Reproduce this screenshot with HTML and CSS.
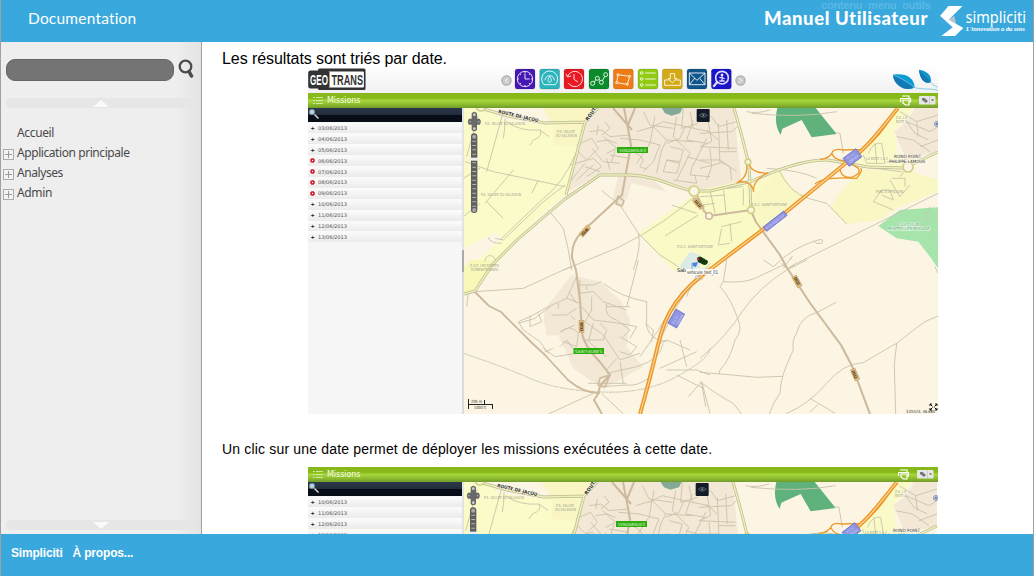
FILE: index.html
```
<!DOCTYPE html>
<html lang="fr">
<head>
<meta charset="utf-8">
<title>Documentation</title>
<link rel="stylesheet" href="styles.css">
</head>
<body>
<div class="page">
  <header class="top">
    <h1 class="doc-title">Documentation</h1>
    <div class="brand">
      <span class="skip">contenu&nbsp; menu&nbsp; outils</span>
      <span class="manual">Manuel Utilisateur</span>
      <svg class="logo" width="90" height="32" viewBox="0 0 90 32">
        <path d="M8.500 13.500L14.500 10L16 18Z" fill="#b4c3cf"/>
        <path d="M8.500 0H22.500L8.500 14L0 10Z" fill="#fff"/>
        <path d="M0 9.700L8.500 13.500L23.300 22L15 30H1.300L12.700 21.300Z" fill="#fff"/>
        <text x="25.500" y="17" textLength="60.500" lengthAdjust="spacingAndGlyphs" class="logo-name">simpliciti</text>
        <text x="26" y="25" textLength="59" lengthAdjust="spacingAndGlyphs" class="logo-tag">L'innovation a du sens</text>
      </svg>
    </div>
  </header>

  <div class="middle">
    <nav class="side">
      <div class="search">
        <span class="field"></span>
        <svg width="18" height="22" viewBox="0 0 18 22" fill="none" stroke="#4c4c4c"><circle cx="7.500" cy="7.500" r="5.800" stroke-width="2.300"/><path d="M11 12.500L13.500 17" stroke-width="3.600" stroke-linecap="round"/></svg>
      </div>
      <div class="scroller"><svg width="16" height="7" viewBox="0 0 16 7"><path d="M0 7L8 0L16 7Z" fill="#fafafa"/></svg></div>
      <ul class="tree">
        <li><i class="none"></i>Accueil</li>
        <li><i class="plus"></i><span class="long">Application principale</span></li>
        <li><i class="plus"></i><span class="long">Analyses</span></li>
        <li><i class="plus"></i>Admin</li>
      </ul>
      <div class="scroller bottom"><svg width="16" height="7" viewBox="0 0 16 7"><path d="M0 0L8 7L16 0Z" fill="#fafafa"/></svg></div>
    </nav>

    <main class="content">
      <p class="first">Les résultats sont triés par date.</p>
      <section class="shot">
        <div class="appbar">
          <svg width="630" height="27" viewBox="308 66 630 27">
            <rect x="318" y="68.500" width="47.500" height="21.500" rx="1.500" fill="#333"/>
            <rect x="309" y="71" width="55.500" height="17" rx="1.500" fill="#fff" stroke="#333" stroke-width="1.200"/>
            <rect x="308.500" y="71" width="21" height="17" rx="1.500" fill="#333"/>
            <text x="310" y="85" textLength="18" lengthAdjust="spacingAndGlyphs" class="geo" fill="#fff">GEO</text>
            <text x="331.500" y="85" textLength="31.500" lengthAdjust="spacingAndGlyphs" class="geo" fill="#333">TRANS</text>
            <g fill="#ccc" stroke="#aaa" stroke-width="1.200"><circle cx="506.500" cy="80.500" r="4.600"/><circle cx="740.500" cy="80.500" r="4.600"/></g>
            <path d="M507.500 78.500L505.500 80.500L507.500 82.500M739.500 78.500L741.500 80.500L739.500 82.500" fill="none" stroke="#fff"/>
            <g transform="translate(500 62) scale(.33333)">
              <g stroke="#0003" stroke-width="2">
                <rect x="45" y="21" width="60" height="60" rx="7" fill="#4717b4"/>
                <rect x="119" y="21" width="60" height="60" rx="7" fill="#2cb5bd"/>
                <rect x="192" y="21" width="60" height="60" rx="7" fill="#e91821"/>
                <rect x="267" y="21" width="60" height="60" rx="7" fill="#0b8b2b"/>
                <rect x="340" y="21" width="60" height="60" rx="7" fill="#ee7c16"/>
                <rect x="414" y="21" width="60" height="60" rx="7" fill="#91cc13"/>
                <rect x="487" y="21" width="60" height="60" rx="7" fill="#d3aa16"/>
                <rect x="561" y="21" width="60" height="60" rx="7" fill="#10568b"/>
                <rect x="634" y="21" width="60" height="60" rx="7" fill="#1a13cb"/>
              </g>
              <g fill="none" stroke="#fff" stroke-opacity=".85" stroke-width="3">
                <circle cx="75" cy="51" r="23"/><path d="M75 34V51H89M75 29V33M75 69V73M53 51H57M93 51H97M60 36L63 39M90 36L87 39M60 66L63 63M90 66L87 63"/>
                <path d="M132 68A24 24 0 1 1 166 68ZM135 55A14 14 0 0 1 163 55M149 43C143 51 142 60 149 61C156 60 155 51 149 43Z"/>
                <path d="M203 43A23 23 0 1 1 205 63M198 36L203 45L213 42M222 36V52L234 60"/>
                <path d="M280 65L292 45L304 61L317 39"/><g fill="#0b8b2b"><circle cx="278" cy="64" r="6"/><circle cx="292" cy="49" r="6"/><circle cx="304" cy="61" r="6"/><circle cx="317" cy="38" r="6"/></g>
                <path d="M354 38L389 43L382 67L350 62Z"/><g fill="#ee7c16"><circle cx="354" cy="38" r="3"/><circle cx="389" cy="43" r="3"/><circle cx="382" cy="67" r="3"/><circle cx="350" cy="62" r="3"/></g>
                <path d="M436 33H467M436 51H467M436 69H467"/><circle cx="425" cy="33" r="4"/><circle cx="425" cy="51" r="4"/><circle cx="425" cy="69" r="4"/>
                <path d="M506 54H494V70H541V54H529M511 35H524V50H531L517 62L504 50H511Z"/>
                <path d="M568 33H615V68H568ZM568 33L591 55L615 33M568 68L584 49M615 68L599 49"/>
                <circle cx="666" cy="47" r="19" stroke-width="5"/><path d="M652 60L640 74" stroke-width="7"/><circle cx="666" cy="39" r="3" fill="#fff"/><path d="M666 43V57M658 46L674 50M658 57H674" stroke-width="4"/>
              </g>
            </g>
            <g transform="translate(740 62) scale(.33333)">
              <path d="M459 38C497 32 522 46 524 76C505 88 463 78 459 38Z" fill="#0a9bd0"/><path d="M459 38L524 76C505 88 463 78 459 38Z" fill="#1379b5"/>
              <path d="M537 23C558 26 576 38 573 61C556 67 540 55 537 23Z" fill="#0d98cc"/><path d="M537 23L573 61C556 67 540 55 537 23Z" fill="#1679b2"/>
              <path d="M518 75C548 85 570 77 596 86M570 58C577 70 588 72 596 77M459 38C490 51 505 62 524 76" fill="none" stroke="#6dc4e7" stroke-width="2.500"/>
            </g>
          </svg>
        </div>
        <div class="greenbar">
          <svg width="10" height="9" viewBox="0 0 10 9"><path d="M0 1.500H2M3 1.500H10M0 4.500H2M3 4.500H10M0 7.500H2M3 7.500H10" stroke="#cfe99d" stroke-width="1"/></svg>
          <b>Missions</b>
          <svg class="tools" width="36" height="11" viewBox="0 0 36 11"><path d="M2 1H9V3M.5 7V3.500H10.500V7H8.500M3 5H9V10H5.500L3 8Z" fill="none" stroke="#fff" stroke-width="1.200"/><rect x="19" y="1" width="16.500" height="8.500" rx="1" fill="#e6e6e6"/><path d="M22 3L24.500 3L28 6L26 8L22 5Z" fill="#777"/><path d="M29.500 1V9.500" stroke="#bbb" stroke-width=".6"/><path d="M31 4.500H34L32.500 6Z" fill="#444"/></svg>
        </div>
        <div class="body">
          <div class="list">
            <div class="find"><svg width="13" height="13" viewBox="0 0 13 13"><circle cx="4" cy="4" r="2.700" fill="#b9d3e1" stroke="#71889a"/><path d="M6.500 6.500L10.500 10.500" stroke="#ddd" stroke-width="1.400"/></svg></div>
            <ul>
              <li>03/06/2013</li><li>04/06/2013</li><li>05/06/2013</li>
              <li class="err">06/06/2013</li><li class="err">07/06/2013</li><li class="err">08/06/2013</li><li class="err">09/06/2013</li>
              <li>10/06/2013</li><li>11/06/2013</li><li>12/06/2013</li><li>13/06/2013</li>
            </ul>
          </div>
          <div class="split"></div>
          <svg class="map" width="474" height="306" viewBox="464 108 474 306">
            <g id="map">
              <rect x="464" y="108" width="474" height="306" fill="#fcf5e4"/>
              <!-- land use -->
              <g transform="translate(460 100) scale(.33333)">
                <path d="M10 20H65L130 60L250 75L375 65L320 280L220 365L110 490L95 510H10L70 465L125 415L105 398L10 445Z" fill="#fbfbc9"/>
                <path d="M245 20H410L375 65L350 140L280 135L278 75Z" fill="#f9f6c4"/>
                <path d="M400 20H820L845 250L740 270L640 262L560 230L515 235L495 290L490 318L458 300L475 226L420 223L318 278L350 140L375 65Z" fill="#f3e8d5"/>
                <path d="M515 235L495 250L487 290L500 300L515 250L620 275L570 230Z" fill="#f3e8d5"/>
                <path d="M605 24H668L660 40L635 47L615 40Z" fill="#84aa96"/>
                <path d="M535 400L700 285L860 250L880 340L860 400L760 500L640 510L600 470Z" fill="#fafac6"/>
                <path d="M690 455L760 480V515L655 505Z" fill="#dcebe5"/>
              </g>
              <g transform="translate(700 100) scale(.33333)">
                <path d="M0 270L115 245L160 255L240 208L280 270L295 310L260 335L50 500L0 505Z" fill="#fafac6"/>
                <path d="M125 325L240 208L275 265L325 292L190 390L150 325Z" fill="#f9f7c3"/>
                <path d="M592 24H640L583 90L590 150L615 180V205L500 200L455 190Z" fill="#fafac8"/>
                <path d="M485 210L620 210L714 240V275L590 325L540 360L440 372L390 325L425 270Z" fill="#f9f7c3"/>
                <path d="M645 24H714V155L620 180L583 95L620 65Z" fill="#f3e8d5"/>
                <path d="M232 24H347L410 102L335 112L305 60L247 86L242 105Q220 72 232 24Z" fill="#5fb27c"/>
                <path d="M535 378L600 330L714 322V505L690 470L655 425L590 415Z" fill="#a6e4ab"/>
              </g>
              <g transform="translate(460 260) scale(.33333)">
                <path d="M10 25L30 0H115L95 30L50 90L10 105Z" fill="#f8f8b8"/>
                <path d="M335 45L420 65L485 125L510 180L500 260L548 322L430 387L340 325L295 225L260 227L250 170L265 135Z" fill="#f3e8d5"/>
              </g>
              <!-- minor streets -->
              <g fill="none" stroke="#c8c3a9" stroke-width="2.700">
                <g transform="translate(460 100) scale(.33333)">
                  <path d="M130 35L80 215M135 55Q135 90 130 115M55 45L20 170M140 65Q180 95 240 90L268 110M240 90Q250 110 220 120L210 135M15 185L100 215L315 260M160 210L75 310M10 235L60 205M235 240L215 280M80 305L130 355M10 350L60 310M345 165Q310 250 245 300L120 420M130 420L250 305L315 255M85 412Q90 430 125 430M105 415L130 420M75 485Q75 467 90 467T106 483L98 492"/>
                  <path d="M390 95L425 90L450 110L510 105M350 135L395 115L415 145L380 180L350 150M330 195L400 175L425 200L380 230M395 145L430 185L480 190M350 240L400 195M440 175L450 210M375 190L330 245M430 110L470 145L440 160M530 95L580 80L620 120L700 125M540 120L600 135L580 185L550 215M585 50L570 130L530 190M520 155Q560 175 545 190T560 205M620 120L605 150L590 220M650 50L640 110L690 160L650 240M700 60L680 120L740 130M620 180L660 190L650 220L610 215ZM630 140L670 150L660 185L620 180M550 35L570 75L640 85M570 85L610 65L700 85M670 25L665 85L715 70M740 115L700 195M680 170L750 190M700 190L690 225L750 230M640 240L710 250L705 225M450 165L510 175M465 150L455 185M415 75L410 105M435 65L450 85L425 105M480 115L540 120M375 200L420 215M620 130L660 115L675 80M410 125L445 120L470 130M690 35L700 85L750 95"/>
                  <path d="M425 272L480 315L535 400L600 465L655 500M535 400Q545 440 520 510M265 330L310 385Q325 440 335 510M720 275Q620 370 480 440L310 510M615 408L715 345M635 315L710 340M700 290Q700 330 735 320"/>
                </g>
                <g transform="translate(700 100) scale(.33333)">
                  <path d="M0 60L35 50L55 80L110 65M0 100L95 95L112 80M0 140L110 145M25 65L35 125L0 140M55 70L60 190L0 205M80 60L85 150M0 180L60 180L110 215M20 90L55 120M60 155L110 155M30 145L35 200L20 240M60 185L90 200L95 240"/>
                  <path d="M30 270L45 340M70 260L78 340M0 290L75 285M5 315L45 310M80 265L130 260M130 265V315M65 380L125 365M65 385L55 435L90 430M90 370L95 425M140 35Q170 42 210 30M155 40Q300 55 410 35M200 205Q300 210 350 235M235 208Q270 280 325 295L380 310Q400 330 440 372"/>
                  <path d="M410 98L420 100L430 160M270 500L714 280"/>
                  <path d="M600 35L650 65L714 45M620 65L690 95L714 80M590 110L640 120L690 155M650 65L655 110M620 65L645 100L685 120M660 140L714 120M505 160Q520 125 545 130L555 190L500 190L490 165M525 130L530 190M560 185L615 185M485 200L605 215M545 285L580 300L570 270L545 270L520 305L580 330M575 235H615V260M570 240L600 290L630 255M690 320L675 350L690 370M665 370L700 400M220 500Q280 440 355 420Q375 415 365 430Q350 435 340 422M220 500L190 480M250 505Q290 450 270 480M600 230L620 205"/>
                </g>
                <g transform="translate(460 260) scale(.33333)">
                  <path d="M45 95L190 85L310 30L335 20M535 0L510 100L500 140M350 50L320 115L265 140L210 170L175 185L190 210L240 245L265 280M175 190L225 175L270 140M235 160L245 185L210 200L210 165M360 75H400L425 65M360 60V100L400 95L430 125L500 150M380 75V90M320 115L360 130M330 100L350 130M395 110V150L375 185L430 225L480 300L540 280M440 140L510 140M440 130Q430 170 470 180L510 210L490 230M275 165L320 165L350 145M330 165L345 180M365 140L400 180L480 190L530 200L510 235M295 145V130M305 215Q330 190 355 220L350 260L310 245M345 195L300 215M300 260L320 240L350 280L285 290L250 265M375 240L430 240L440 210L420 190M400 190L385 245L440 290M480 230L530 260L510 285L480 275M470 295L440 330M480 305L490 370M430 70Q480 110 560 125V200Q570 240 620 245M555 190L580 210L575 245M440 340L530 320Q600 300 610 250M385 370L500 370M600 250L620 240L690 270M430 380L500 375Q530 380 565 355M255 275L280 265M750 10L690 80L650 140L600 240M680 110Q690 70 730 55M630 150L595 210L540 290"/>
                  <path d="M10 280Q130 320 210 355T410 395Q550 405 650 350T750 265" stroke-dasharray="5 2" stroke="#b8b4a0"/>
                  <path d="M620 330H710L750 345M660 240L680 320M600 325L710 275M725 365L685 410M725 365L750 460M650 345L730 385M400 400L265 462M425 400L490 462M20 140L25 100"/>
                </g>
                <g transform="translate(700 260) scale(.33333)">
                  <path d="M80 0L70 65L60 80Q90 110 113 175Q130 210 105 240Q90 300 60 330L57 342M70 65Q130 70 165 55L250 15M0 295Q80 230 130 150Q180 80 260 30L320 0M408 127L350 158Q300 170 290 220Q275 240 280 270Q240 350 240 400Q220 425 208 462M0 337Q100 345 170 352L250 349M590 250L583 315L587 462M257 462Q330 430 380 370T490 308Q570 260 590 250Q640 210 675 185L714 168M0 365Q60 410 100 430L125 462M5 370L17 440M330 415L405 460M355 433L330 455M245 10Q260 35 285 15M705 20L714 40"/>
                </g>
              </g>
              <!-- departmental roads -->
              <g fill="none" stroke="#cdb99c" stroke-linejoin="round">
                <path d="M624 108L629 134L631 145L622 195L583 231Q571 242 572 258L576 270L580 300L582 333Q584 346 600 362L610 375L600 386L598 394L594 400L602 414M613 108L632 130M635 108L628 125" stroke-width="2"/>
                <path d="M475 292L489 306L501 312L532 343L545 355L568 380Q585 394 600 393" stroke-width="1.800"/>
                <path d="M697 195L704 211L709 216L751 210M752 213L756 222L780 255L787 268L810 303L841 345L852 366L870 414" stroke-width="2.100"/>
                <circle cx="709" cy="216" r="3.300" fill="#fcf5e4" stroke-width="1.600"/><path d="M600 378L610 375L605 387L598 385ZM618 196L624 201L622 206L616 204Z" stroke-width="1.500"/>
              </g>
              <!-- primary roads -->
              <g fill="none" stroke-linejoin="round">
                <path d="M480 108L508 116L545 123L585 122M598 108L585 122L566 195M464 294L475 291L492 265L518 239L565 199L600 175H630C660 176 678 190 695 191H710L752 181Q800 159 828 160L868 167L904 168L938 152M734 108Q742 135 749 165L751 210" stroke="#b9bb8c" stroke-width="2.900"/>
                <path d="M480 108L508 116L545 123L585 122M598 108L585 122L566 195M464 294L475 291L492 265L518 239L565 199L600 175H630C660 176 678 190 695 191H710L752 181Q800 159 828 160L868 167L904 168L938 152M734 108Q742 135 749 165L751 210" stroke="#edeebc" stroke-width="1.500"/>
                <g fill="#fcf5e4" stroke="#d0d184" stroke-width="1.700"><circle cx="694" cy="191" r="5"/><circle cx="748" cy="162" r="2.800"/><circle cx="751" cy="210" r="3.400"/><circle cx="908" cy="167" r="5"/><circle cx="481" cy="106" r="5"/></g>
              </g>
              <!-- motorway -->
              <g fill="none" stroke="#ed982b">
                <g transform="translate(700 100) scale(.33333)" stroke-width="4">
                  <path d="M140 195Q145 230 112 248M148 195Q158 220 205 220M110 248Q150 235 162 275M160 275Q158 240 205 218M360 178Q390 175 398 155Q405 145 430 150L490 148Q540 110 575 50M395 160Q405 185 440 182M420 200Q420 235 455 232Q485 220 475 205L440 180M345 252Q370 228 470 235Q490 210 482 205"/>
                </g>
                <path d="M898 108C880 130 867 148 852 158L786 212L712 268C680 290 665 313 658 345C652 370 647 390 640 414" stroke-width="4"/>
                <path d="M898 108C880 130 867 148 852 158L786 212L712 268C680 290 665 313 658 345C652 370 647 390 640 414" stroke="#f9d9a0" stroke-width="1.100"/>
              </g>
              <!-- labels -->
              <g class="lab dark">
                <text transform="translate(498 113) rotate(13)" textLength="41" lengthAdjust="spacingAndGlyphs">ROUTE DE JACOU</text>
                <text transform="translate(588 121) rotate(-55)" textLength="18" lengthAdjust="spacingAndGlyphs">ROUTE</text>
              </g>
              <g class="lab dark place">
                <text x="894" y="158" textLength="27" lengthAdjust="spacingAndGlyphs">ROND POINT</text><text x="889" y="162.500" textLength="36" lengthAdjust="spacingAndGlyphs">PHILIPPE LAMOUR</text>
              </g>
              <g class="lab">
                <text x="485" y="125" textLength="40" lengthAdjust="spacingAndGlyphs">P.A. VALLEE DU SALAISON</text><text x="481" y="195.500" textLength="40" lengthAdjust="spacingAndGlyphs">P.A. VALLEE DU SALAISON</text>
                <text x="557" y="133" textLength="18" lengthAdjust="spacingAndGlyphs">P.A. VALLEE</text><text x="556" y="137" textLength="21" lengthAdjust="spacingAndGlyphs">DU SALAISON</text>
                <text x="677" y="247.500" textLength="36" lengthAdjust="spacingAndGlyphs">Z.A.C. SAINT-ANTOINE</text><text x="751" y="206" textLength="36" lengthAdjust="spacingAndGlyphs">Z.A.C. SAINT-ANTOINE</text>
                <text x="470" y="267" textLength="29" lengthAdjust="spacingAndGlyphs">Z.A.E. LES PORTES</text><text x="471" y="271" textLength="27" lengthAdjust="spacingAndGlyphs">DOMENITIENNES</text>
                <text x="866" y="160" textLength="22" lengthAdjust="spacingAndGlyphs">LA BISTE 1 &amp; 2</text><text x="876" y="193" textLength="27" lengthAdjust="spacingAndGlyphs">PARC D'APTALION</text>
                <text x="896" y="119" textLength="11" lengthAdjust="spacingAndGlyphs">Z.A. LA</text><text x="896" y="123" textLength="11" lengthAdjust="spacingAndGlyphs">BISTE 2</text>
              </g>
              <g class="lab pale"><text x="899" y="226" textLength="20" lengthAdjust="spacingAndGlyphs">GOLF CLUB</text><text x="888" y="230" textLength="42" lengthAdjust="spacingAndGlyphs">MONTPELLIER MASSANE</text></g>
              <rect x="617" y="147" width="31" height="6" fill="#2dad0d"/><rect x="573.500" y="348" width="30.500" height="6" fill="#2dad0d"/>
              <g class="lab white"><text x="619" y="151.700" textLength="27" lengthAdjust="spacingAndGlyphs">VENDARGUES</text><text x="575" y="352.700" textLength="27" lengthAdjust="spacingAndGlyphs">SAINT-AUNES</text></g>
              <g fill="#9095df" stroke="#6870d2" stroke-width=".8">
                <rect x="844.500" y="152.500" width="16" height="10" transform="rotate(-37 852.500 157.500)"/><rect x="762" y="218.500" width="26" height="5.500" transform="rotate(-38 775 221)"/><rect x="668.500" y="314" width="16" height="10" transform="rotate(-60 676 319)"/>
              </g>
              <g class="lab white road">
                <text transform="translate(848 159.500) rotate(-37)" textLength="9">E15/</text><text transform="translate(850 163) rotate(-37)" textLength="11">E80/A9</text>
                <text transform="translate(767 229.500) rotate(-38)" textLength="22">E15/E80/A9</text>
                <text transform="translate(674 324) rotate(-60)" textLength="9">E15/</text><text transform="translate(678 325) rotate(-60)" textLength="11">E80/A9</text>
              </g>
              <g fill="#dfbd83" stroke="#bd9960" stroke-width=".5">
                <rect x="579" y="228.500" width="12" height="5" transform="rotate(-48 585 231)"/><rect x="692" y="201" width="12" height="5" transform="rotate(48 698 203.500)"/><rect x="575.500" y="324" width="12" height="5" transform="rotate(-90 581.500 326.500)"/><rect x="791" y="279" width="12" height="5" transform="rotate(60 797 281.500)"/><rect x="849" y="372" width="12" height="5" transform="rotate(66 855 374.500)"/>
              </g>
              <g class="lab brown">
                <text transform="translate(583 236) rotate(-48)" textLength="9">D145</text><text transform="translate(694 201.500) rotate(48)" textLength="9">D112</text><text transform="translate(583 331) rotate(-90)" textLength="9">D145</text><text transform="translate(793.500 278) rotate(60)" textLength="9">D112</text><text transform="translate(851.500 371) rotate(66)" textLength="9">D112</text>
              </g>
              <circle cx="937" cy="124" r="2.500" fill="#e6eefa" stroke="#8294b5"/>
              <path d="M937 122.500V125.500M935.500 124H938.500" stroke="#49658f"/>
              <!-- vehicle -->
              <path d="M697 258Q700 255 703 258L708 261Q708 265 704 265L698 262Z" fill="#16380f"/><circle cx="698" cy="259" r="1.200" fill="#d23"/>
              <path d="M692 263L698 262L696 267L693 266Z" fill="#4c82dd"/><path d="M692 263V270" stroke="#7aa4e8"/>
              <rect x="686" y="269" width="33" height="6" fill="#fff" fill-opacity=".85"/>
              <text x="677" y="272" textLength="9" class="veh">Sab</text><text x="687" y="274" textLength="31" lengthAdjust="spacingAndGlyphs" class="veh">vehicule_test_01</text>
              <circle cx="697" cy="277" r="1.500" fill="#d8e8f5" stroke="#8fb3d5" stroke-width=".6"/>
              <!-- map controls -->
              <g transform="translate(460 100) scale(.33333)">
                <path d="M35 40Q43 30 51 40V56H59Q66 65 59 74H51V90Q43 98 35 90V74H27Q20 65 27 56H35Z" fill="#696969"/>
                <g fill="#cfcfcf"><circle cx="43" cy="44" r="4"/><circle cx="43" cy="86" r="4"/><circle cx="30" cy="65" r="2"/><circle cx="56" cy="65" r="2"/></g>
                <rect x="33" y="100" width="19" height="239" rx="9" fill="#606060"/><path d="M42.500 122V322" stroke="#b5b5b5" stroke-width="11" stroke-dasharray="3 10"/><circle cx="42.500" cy="110" r="6" fill="#aaa"/><circle cx="42.500" cy="330" r="6" fill="#aaa"/><rect x="29" y="173" width="26" height="9" fill="#eee"/>
                <rect x="710" y="27" width="39" height="39" rx="3" fill="#111a25"/><path d="M718 46Q730 35 742 46Q730 57 718 46Z" fill="none" stroke="#7b8893" stroke-width="2"/><circle cx="730" cy="46" r="3.500" fill="#7b8893"/>
              </g>
              <path d="M468.500 399V409M468.500 404.500H492.500M484.500 400V404.500M492.500 404V409" stroke="#222" fill="none"/>
              <text x="471" y="403" textLength="11" lengthAdjust="spacingAndGlyphs" class="scale">200 m</text><text x="474" y="408.500" textLength="12" lengthAdjust="spacingAndGlyphs" class="scale">1000 ft</text>
              <text x="906" y="413" textLength="29" lengthAdjust="spacingAndGlyphs" class="scale">3.05524, 46.684</text>
              <path d="M930 406V404H932M930 404L932.500 406.500M935 404H937V406M937 404L934.500 406.500M930 408V410H932M930 410L932.500 407.500M937 408V410H935M937 410L934.500 407.500" stroke="#111" fill="none"/>
            </g>
          </svg>
        </div>
      </section>

      <p class="second">Un clic sur une date permet de déployer les missions exécutées à cette date.</p>
      <section class="shot">
        <div class="greenbar">
          <svg width="10" height="9" viewBox="0 0 10 9"><path d="M0 1.500H2M3 1.500H10M0 4.500H2M3 4.500H10M0 7.500H2M3 7.500H10" stroke="#cfe99d" stroke-width="1"/></svg>
          <b>Missions</b>
          <svg class="tools shifted" width="36" height="11" viewBox="0 0 36 11"><path d="M2 1H9V3M.5 7V3.500H10.500V7H8.500M3 5H9V10H5.500L3 8Z" fill="none" stroke="#fff" stroke-width="1.200"/><rect x="19" y="1" width="16.500" height="8.500" rx="1" fill="#e6e6e6"/><path d="M22 3L24.500 3L28 6L26 8L22 5Z" fill="#777"/><path d="M29.500 1V9.500" stroke="#bbb" stroke-width=".6"/><path d="M31 4.500H34L32.500 6Z" fill="#444"/></svg>
        </div>
        <div class="body">
          <div class="list">
            <div class="find"><svg width="13" height="13" viewBox="0 0 13 13"><circle cx="4" cy="4" r="2.700" fill="#b9d3e1" stroke="#71889a"/><path d="M6.500 6.500L10.500 10.500" stroke="#ddd" stroke-width="1.400"/></svg></div>
            <ul><li>10/06/2013</li><li>11/06/2013</li><li>12/06/2013</li><li>13/06/2013</li></ul>
          </div>
          <div class="split"></div>
          <svg class="map" width="474" height="306" viewBox="465 108 474 306"><use href="#map"/></svg>
        </div>
      </section>
    </main>
  </div>

  <footer class="bottom-bar"><span>Simpliciti</span><span>À propos...</span></footer>
</div>
</body>
</html>
```
FILE: styles.css
```
*, *::before { box-sizing: border-box; }
body { margin: 0; overflow: hidden; font-family: "Liberation Sans", Arial, sans-serif; }
.page { display: flex; flex-direction: column; height: 576px; border: solid #a0a0a0; border-width: 0 1px; background: #fff; }
.top { display: flex; justify-content: space-between; height: 42px; background: #39a8dc; color: #fff; }
.doc-title { margin: 8px 0 0 27px; font: 400 15.5px/20px Lato, sans-serif; letter-spacing: .2px; }
.brand { display: flex; position: relative; padding: 6px 3px 0 0; }
.skip { position: absolute; left: 57px; top: -4px; font: bold 11px/18px "Liberation Sans", sans-serif; color: #5bb8e6; white-space: nowrap; letter-spacing: -.2px; }
.manual { position: relative; width: 164px; margin-right: 12px; font: 900 18.5px/24px Lato, sans-serif; letter-spacing: .58px; white-space: nowrap; }
.logo { overflow: visible; }
.logo-name { font: 16px "Noto Sans", sans-serif; fill: #fff; }
.logo-tag { font: italic bold 6px "Liberation Serif", serif; fill: #fff; }
.middle { display: flex; height: 492px; }
.side { display: flex; flex-direction: column; width: 201px; border-right: 1px solid #a0a0a0; background: linear-gradient(to right, #eee 175px, #e3e3e3); }
.search { display: flex; gap: 4px; padding: 17px 0 0 5px; height: 56px; }
.field { width: 168px; height: 22px; border: 1px solid #666; border-radius: 9px; background: #747474; }
.scroller { display: flex; justify-content: center; align-items: center; width: 190px; height: 10px; margin-left: 5px; border-radius: 5px; background: #e6e6e6; }
.scroller.bottom { margin-top: auto; margin-bottom: 4px; }
.tree { list-style: none; margin: 15px 0 0; padding: 0 0 0 2px; font: 12px/20px "Noto Sans", sans-serif; color: #4a4a4a; letter-spacing: -.35px; }
.tree li { display: flex; height: 20px; white-space: nowrap; }
.tree i { width: 11px; height: 11px; margin: 6px 3px 0 0; }
.long { letter-spacing: -.43px; }
.plus { border: 1px solid #aaa; background: linear-gradient(#999, #999) 50% 50% / 7px 1px no-repeat, linear-gradient(#999, #999) 50% 50% / 1px 7px no-repeat, #f4f4f4; }
.content { flex: 1; min-width: 0; padding-left: 20px; overflow: hidden; color: #000; }
.content p { margin: 0; white-space: nowrap; }
.content .first { height: 24px; padding-top: 8px; font-size: 16px; line-height: 18px; letter-spacing: -.08px; }
.content .second { height: 53px; padding-top: 27px; font-size: 14px; line-height: 17px; letter-spacing: .175px; }
.shot { width: 630px; margin-left: 86px; }
.appbar { height: 27px; background: linear-gradient(#fff, #f0f0f0); }
.appbar svg { display: block; }
.geo { font: bold 15px "Liberation Sans", sans-serif; }
.greenbar { display: flex; align-items: center; height: 15px; padding: 0 2px 0 5px; background: linear-gradient(#86b81b, #87ba17 35%, #a7d63c 50%, #8dbd2d 75%, #729b2c); color: #f8fcec; }
.greenbar b { margin-left: 4px; font: 500 8px/12px "DejaVu Sans", sans-serif; letter-spacing: -.05px; }
.tools { margin-left: auto; }
.shifted { margin-right: 2px; }
.body { display: flex; height: 306px; }
.list { width: 154px; background: #f6f6f6; overflow: hidden; }
.find { height: 14px; background: linear-gradient(#2c394a, #222c3b 48%, #080e18 52%, #080d16); }
.find svg { display: block; }
.list ul { list-style: none; margin: 0; padding: .5px 0 0; }
.list li { display: flex; align-items: center; height: 10.9px; padding-left: 2px; background: linear-gradient(#fcfcfc, #ebebeb); font: 5.2px/10px "DejaVu Sans", sans-serif; color: #555; letter-spacing: -.1px; }
.list li::before { content: "+"; flex: none; width: 5px; margin-right: 3px; text-align: center; font-weight: bold; color: #111; }
.list .err::before { content: ""; height: 5px; border: 1.8px solid #cf2034; border-radius: 50%; background: radial-gradient(#fff 15%, #cf2034 50%); }
.split { width: 2px; background: linear-gradient(#e3e3e3 142px, #aaa 142px 164px, #d8dce2 164px); }
.map { display: block; flex: none; }
.lab { font: 4px "DejaVu Sans", sans-serif; fill: #a3a493; }
.lab.dark { font-size: 4.8px; font-weight: bold; fill: #333; paint-order: stroke; stroke: #fffbea; stroke-width: .8px; }
.lab.place { font-size: 4.5px; font-weight: normal; }
.lab.white { font-size: 4.3px; fill: #dff5d8; }
.lab.road { font-size: 3.2px; fill: #d6d8ff; }
.lab.pale { fill: #4f9a62; paint-order: stroke; stroke: #f4fff4; stroke-width: .9px; }
.lab.brown { font-size: 4px; font-weight: bold; fill: #594020; }
.veh { font: 5px "DejaVu Sans", sans-serif; fill: #222; }
.scale { font: 4.3px "DejaVu Sans", sans-serif; fill: #333; }
.bottom-bar { display: flex; gap: 10px; height: 42px; padding: 10px 0 0 10px; background: #39a8dc; color: #fff; font: bold 12px/18px "Liberation Sans", sans-serif; letter-spacing: -.18px; }
```
